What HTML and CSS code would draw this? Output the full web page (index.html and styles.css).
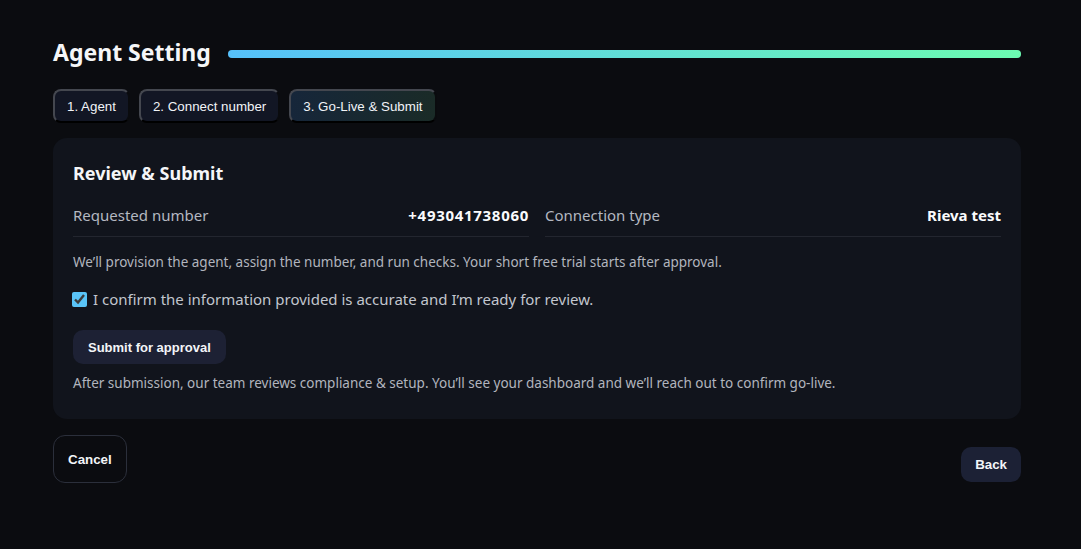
FILE: index.html
```html
<!DOCTYPE html>
<html lang="en">
<head>
    <meta charset="UTF-8">
    <meta name="viewport" content="width=device-width, initial-scale=1.0">
    <title>Agent Setting</title>
    <link rel="stylesheet" href="styles.css">
</head>
<body>
    <div class="page">
        <div class="header">
            <h1>Agent Setting</h1>
            <div class="progress"><div class="progress-fill"></div></div>
        </div>

        <div class="steps">
            <button class="step">1. Agent</button>
            <button class="step">2. Connect number</button>
            <button class="step active">3. Go-Live &amp; Submit</button>
        </div>

        <div class="card">
            <h2>Review &amp; Submit</h2>
            <div class="summary">
                <div class="summary-row">
                    <span class="label">Requested number</span>
                    <span class="value phone">+493041738060</span>
                </div>
                <div class="summary-row">
                    <span class="label">Connection type</span>
                    <span class="value">Rieva test</span>
                </div>
            </div>
            <p class="note">We’ll provision the agent, assign the number, and run checks. Your short free trial starts after approval.</p>
            <label class="confirm">
                <input type="checkbox" checked>
                <span>I confirm the information provided is accurate and I’m ready for review.</span>
            </label>
            <button class="btn btn-submit">Submit for approval</button>
            <p class="note">After submission, our team reviews compliance &amp; setup. You’ll see your dashboard and we’ll reach out to confirm go-live.</p>
        </div>

        <div class="footer">
            <button class="btn btn-cancel">Cancel</button>
            <button class="btn btn-back">Back</button>
        </div>
    </div>
</body>
</html>
```

FILE: styles.css
```css
* {
    margin: 0;
    padding: 0;
    box-sizing: border-box;
}
body {
    background: #0b0c10;
    color: #f3f4f6;
    font-family: 'Noto Sans', sans-serif;
}
.page {
    width: 968px;
    margin-left: 53px;
    padding-top: 36px;
}
.header {
    display: flex;
    align-items: center;
    gap: 17px;
}
h1 {
    font-size: 23px;
    font-weight: 700;
    color: #f5f6f8;
    white-space: nowrap;
    line-height: 32px;
}
.progress {
    flex: 1;
    height: 8px;
    border-radius: 4px;
    background: #1c2030;
    margin-top: 3px;
}
.progress-fill {
    width: 100%;
    height: 100%;
    border-radius: 4px;
    background: linear-gradient(90deg, #56c1fb, #6cfcb1);
}
.steps {
    display: flex;
    gap: 9px;
    margin-top: 21px;
}
.step {
    font-family: 'Liberation Sans', Arial, sans-serif;
    font-size: 13.33px;
    color: #f1f3f7;
    background: #121624;
    border: 2px solid;
    border-color: #44474f #0a0b0e #000 #44474f;
    border-radius: 8px;
    height: 34px;
    padding: 0 12px;
}
.step.active {
    background: linear-gradient(90deg, #16263a, #1a2b27);
}
.card {
    margin-top: 15px;
    background: #11141c;
    border-radius: 14px;
    padding: 23px 20px 27px;
}
h2 {
    font-size: 18px;
    font-weight: 700;
    color: #f5f6f8;
    line-height: 24px;
}
.summary {
    display: grid;
    grid-template-columns: 1fr 1fr;
    gap: 16px;
    margin-top: 19px;
}
.summary-row {
    display: flex;
    justify-content: space-between;
    align-items: center;
    border-bottom: 1px solid #23262f;
    padding-bottom: 10px;
    font-size: 15px;
    line-height: 22px;
}
.label {
    color: #b4b8c1;
}
.value {
    font-weight: 700;
    color: #fafbfc;
}
.phone {
    letter-spacing: 0.7px;
}
.note {
    font-size: 13.5px;
    color: #b1b5be;
    line-height: 18px;
    margin-top: 16px;
}
.confirm {
    display: flex;
    align-items: center;
    gap: 6px;
    margin-top: 17px;
    font-size: 15px;
    color: #c2c6ce;
    line-height: 22px;
}
.confirm input {
    width: 15px;
    height: 15px;
    accent-color: #59c4f8;
    margin-left: -1px;
}
.btn {
    font-family: 'Liberation Sans', Arial, sans-serif;
    font-weight: 700;
    font-size: 13.33px;
    color: #f3f5f8;
    border: none;
    border-radius: 10px;
    cursor: pointer;
}
.btn-submit {
    margin-top: 20px;
    background: #1d2134;
    height: 34px;
    padding: 0 15px;
    font-size: 13px;
}
.card .btn-submit + .note {
    margin-top: 10px;
}
.footer {
    display: flex;
    justify-content: space-between;
    align-items: flex-end;
    margin-top: 16px;
}
.btn-cancel {
    background: transparent;
    border: 1px solid #2b2f3b;
    border-radius: 12px;
    height: 48px;
    padding: 0 14px;
}
.btn-back {
    background: #1c2135;
    height: 35px;
    padding: 0 14px;
    margin-bottom: 1px;
}
```
